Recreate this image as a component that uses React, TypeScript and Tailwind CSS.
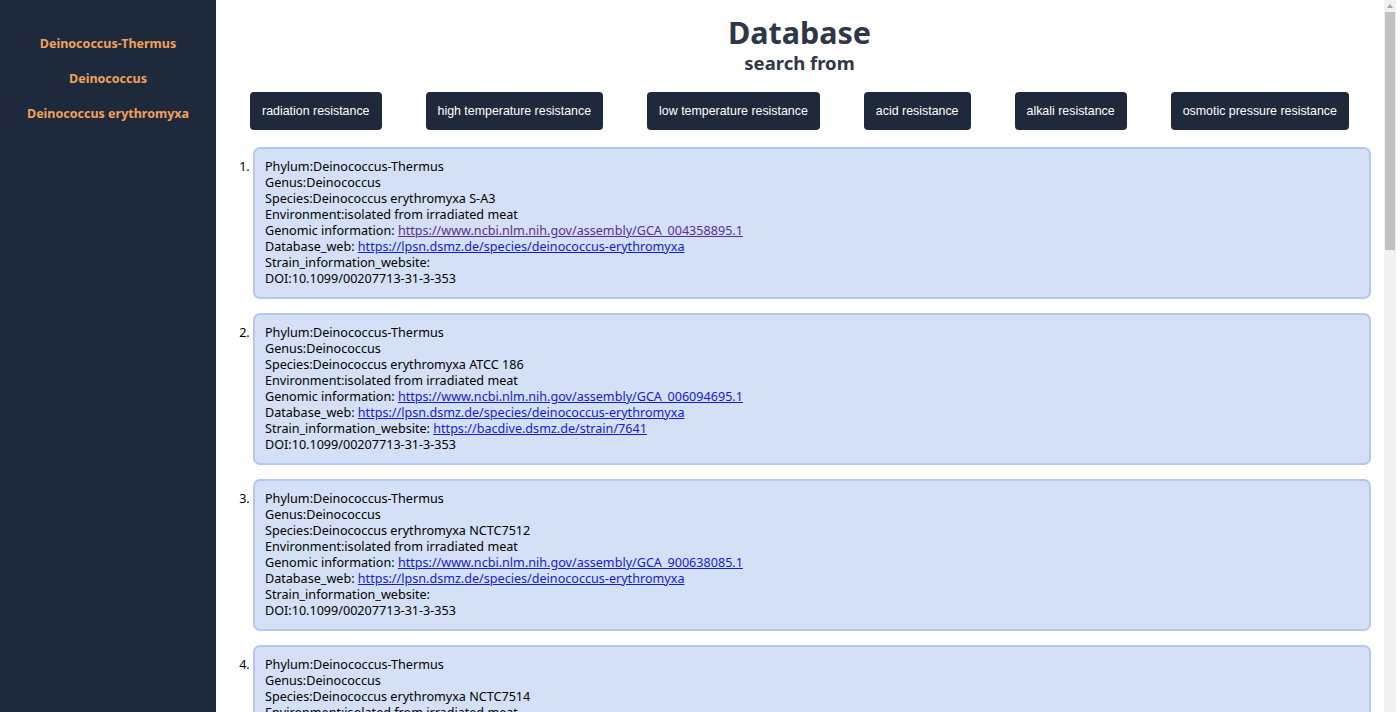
import React from "react";

type Entry = {
  species: string;
  genomic: string;
  genomicVisited?: boolean;
  strain?: string;
};

const entries: Entry[] = [
  { species: "Deinococcus erythromyxa S-A3", genomic: "https://www.ncbi.nlm.nih.gov/assembly/GCA_004358895.1", genomicVisited: true },
  { species: "Deinococcus erythromyxa ATCC 186", genomic: "https://www.ncbi.nlm.nih.gov/assembly/GCA_006094695.1", strain: "https://bacdive.dsmz.de/strain/7641" },
  { species: "Deinococcus erythromyxa NCTC7512", genomic: "https://www.ncbi.nlm.nih.gov/assembly/GCA_900638085.1" },
  { species: "Deinococcus erythromyxa NCTC7514", genomic: "https://www.ncbi.nlm.nih.gov/assembly/GCA_900638095.1" },
];

const buttons = [
  "radiation resistance",
  "high temperature resistance",
  "low temperature resistance",
  "acid resistance",
  "alkali resistance",
  "osmotic pressure resistance",
];

const font = { fontFamily: '"Noto Sans", "Open Sans", sans-serif' };

export default function App() {
  return (
    <div className="flex h-screen w-full overflow-hidden bg-white" style={font}>
      <aside className="w-[216px] shrink-0 bg-[#1e293b] pt-[34px] flex flex-col items-center gap-[15px]">
        {["Deinococcus-Thermus", "Deinococcus", "Deinococcus erythromyxa"].map((t) => (
          <div key={t} className="text-[#f2a15a] font-bold text-[12.5px] leading-[20px]">
            {t}
          </div>
        ))}
      </aside>
      <main className="flex-1 h-screen overflow-hidden">
        <div className="pt-[14px] text-center text-[#2d3748]">
          <h1 className="text-[30.5px] leading-[36px] font-bold">Database</h1>
          <h2 className="text-[18.5px] leading-[22px] font-bold mt-[2px]">search from</h2>
        </div>
        <div className="flex justify-center gap-[44px] mt-[18px]">
          {buttons.map((b) => (
            <button
              key={b}
              className="h-[38px] px-[12px] rounded-[4px] bg-[#1e293b] text-white text-[12.4px]"
              style={{ fontFamily: '"Liberation Sans", Arial, sans-serif' }}
            >
              {b}
            </button>
          ))}
        </div>
        <ol className="list-decimal pl-[37px] pr-[12px] mt-[17px] text-[12.6px] leading-[16px] text-black">
          {entries.map((e, i) => (
            <li key={i} className="mb-[14px] marker:text-black">
              <div className="bg-[#d3e0f5] border-2 border-[#b2c8ee] rounded-[7px] px-[10px] py-[10px]">
                <div>Phylum:Deinococcus-Thermus</div>
                <div>Genus:Deinococcus</div>
                <div>Species:{e.species}</div>
                <div>Environment:isolated from irradiated meat</div>
                <div>
                  Genomic information:{" "}
                  <a href="#" className={e.genomicVisited ? "underline text-[#5a2d91]" : "underline text-[#1a1acc]"}>
                    {e.genomic}
                  </a>
                </div>
                <div>
                  Database_web:{" "}
                  <a href="#" className="underline text-[#1a1acc]">
                    https://lpsn.dsmz.de/species/deinococcus-erythromyxa
                  </a>
                </div>
                <div>
                  Strain_information_website:{" "}
                  {e.strain ? (
                    <a href="#" className="underline text-[#1a1acc]">
                      {e.strain}
                    </a>
                  ) : null}
                </div>
                <div>DOI:10.1099/00207713-31-3-353</div>
              </div>
            </li>
          ))}
        </ol>
      </main>
      <div className="w-[17px] shrink-0 h-screen bg-white flex">
        <div className="ml-[1px] w-[12px] h-full bg-[#f1f1f1] flex flex-col items-center">
          <div className="h-[12px] w-full flex items-center justify-center">
            <svg width="6" height="4" viewBox="0 0 6 4">
              <path d="M0 4 L3 0 L6 4 Z" fill="#a3a3a3" />
            </svg>
          </div>
          <div className="w-[10px] h-[238px] bg-[#c1c1c1]" />
        </div>
      </div>
    </div>
  );
}
